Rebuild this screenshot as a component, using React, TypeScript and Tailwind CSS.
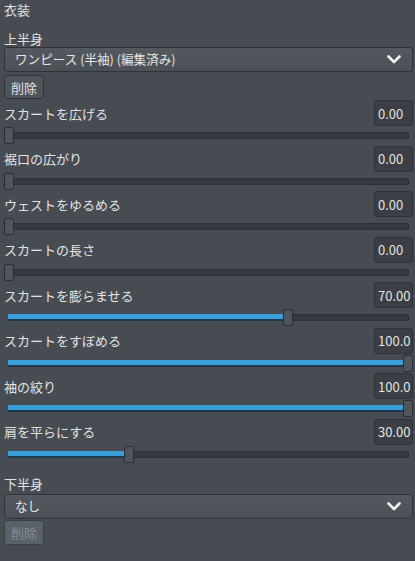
import React from 'react'

const rows: { label: string; value: string; pct: number }[] = [
  { label: 'スカートを広げる', value: '0.00', pct: 0 },
  { label: '裾口の広がり', value: '0.00', pct: 0 },
  { label: 'ウェストをゆるめる', value: '0.00', pct: 0 },
  { label: 'スカートの長さ', value: '0.00', pct: 0 },
  { label: 'スカートを膨らませる', value: '70.00', pct: 0.7 },
  { label: 'スカートをすぼめる', value: '100.0', pct: 1 },
  { label: '袖の絞り', value: '100.0', pct: 1 },
  { label: '肩を平らにする', value: '30.00', pct: 0.3 },
]

function Chevron() {
  return (
    <svg width="14" height="9" viewBox="0 0 14 9" className="shrink-0">
      <path d="M1.5 1.5 L7 7 L12.5 1.5" fill="none" stroke="#f2f2f2" strokeWidth="2.6" strokeLinecap="round" strokeLinejoin="round" />
    </svg>
  )
}

function Select({ text }: { text: string }) {
  return (
    <div className="flex h-[25px] items-center justify-between rounded-[3px] border border-[#2f3338] bg-gradient-to-b from-[#545960] to-[#4b5057] pl-[10px] pr-[11px]">
      <span className="text-[12.6px] leading-none text-[#e4e4e4]">{text}</span>
      <Chevron />
    </div>
  )
}

function Slider({ pct }: { pct: number }) {
  const left = pct * 399
  return (
    <div className="relative h-[19.5px] w-full">
      <div className="absolute left-[4px] right-[4px] top-[5px] h-[7px] rounded-[2px] border border-[#2c3035] bg-[#363a40]" />
      {pct > 0 && (
        <div
          className="absolute left-[4px] top-[5px] h-[7px] border-b-2 border-[#1d3a50] bg-[#3a9fd9]"
          style={{ width: left + 2 }}
        />
      )}
      <div
        className="absolute top-0 h-[17px] w-[10px] rounded-[2px] border border-[#2a2e33] bg-[#50555c]"
        style={{ left }}
      />
    </div>
  )
}

export default function App() {
  return (
    <div
      className="h-[561px] w-[415px] overflow-hidden bg-[#474c53] pl-[4px] pr-[2px] text-[13px] text-[#e2e2e2]"
      style={{ fontFamily: '"Noto Sans CJK JP", "Noto Sans", sans-serif' }}
    >
      <div className="flex h-[18px] items-center leading-none">衣装</div>
      <div className="flex h-[29px] items-end pb-[2px] leading-none">上半身</div>
      <Select text="ワンピース (半袖) (編集済み)" />
      <div className="mt-[3px] flex h-[24px] w-[40px] items-center justify-center rounded-[3px] border border-[#2e3237] bg-[#4f545b] leading-none">
        削除
      </div>
      <div className="mt-[1px]">
        {rows.map((r) => (
          <div key={r.label} className="h-[45.57px]">
            <div className="flex h-[26px] items-center justify-between">
              <span className="leading-none">{r.label}</span>
              <div className="flex h-[26px] w-[39px] items-center overflow-hidden whitespace-nowrap rounded-[3px] border border-[#2e3237] bg-[#3b3f45] pl-[3px] leading-none">
                {r.value}
              </div>
            </div>
            <div className="mt-[1px]">
              <Slider pct={r.pct} />
            </div>
          </div>
        ))}
      </div>
      <div className="flex h-[28px] items-end pb-[3px] leading-none">下半身</div>
      <div className="mt-[1px]">
        <Select text="なし" />
      </div>
      <div className="mt-[1px] flex h-[25px] w-[40px] items-center justify-center rounded-[3px] border border-[#3a3f45] bg-[#5a6168] leading-none text-[#878d94]">
        削除
      </div>
    </div>
  )
}
